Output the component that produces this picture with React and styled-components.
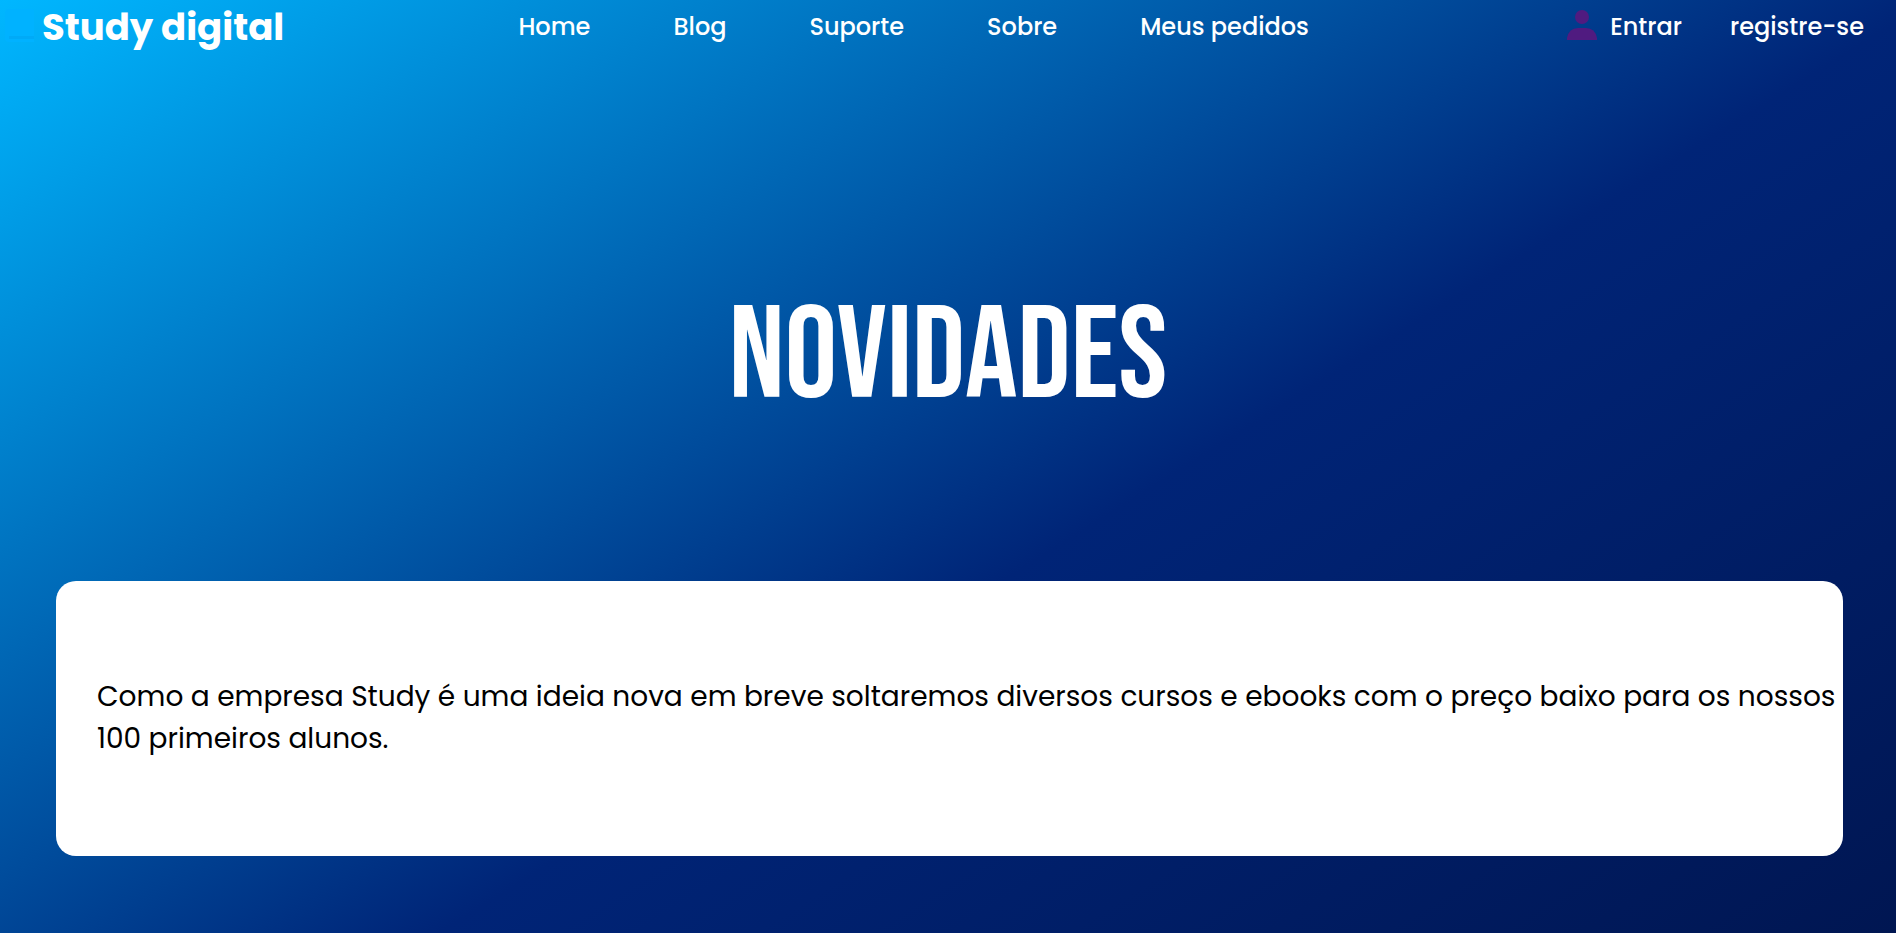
import React from "react";
import styled, { createGlobalStyle } from "styled-components";

const GlobalStyle = createGlobalStyle`
  * { box-sizing: border-box; }
  body {
    margin: 0;
    font-family: Poppins, Inter, "Open Sans", sans-serif;
  }
`;

const Page = styled.div`
  min-height: 100vh;
  background: linear-gradient(148deg, #00b7ff 0%, #002477 57%, #001652 100%);
`;

const Header = styled.header`
  display: flex;
  align-items: center;
  justify-content: space-between;
  height: 54px;
  padding: 0 32px 0 4px;
  color: #fff;
`;

const Brand = styled.a`
  display: flex;
  align-items: center;
  gap: 7px;
  color: #fff;
  font-size: 37px;
  line-height: 54px;
  font-weight: 700;
  text-decoration: none;
`;

const BookIcon = styled.svg`
  width: 31px;
  height: 36px;
  flex: none;
`;

const Nav = styled.nav`
  display: flex;
  gap: 83px;
  margin-right: 24px;
`;

const Account = styled.div`
  display: flex;
  align-items: center;
  gap: 48px;
`;

const HeaderLink = styled.a`
  display: flex;
  align-items: center;
  gap: 13px;
  color: #fff;
  font-size: 24px;
  line-height: 36px;
  font-weight: 500;
  text-decoration: none;
`;

const UserIcon = styled.svg`
  width: 30px;
  height: 36px;
  flex: none;
`;

const Title = styled.h1`
  margin: 0;
  padding: 237px 0 157px;
  color: #fff;
  font-family: "Bebas Neue", "Liberation Sans Narrow", "Roboto", sans-serif;
  font-size: 131px;
  line-height: 133px;
  font-weight: 400;
  text-align: center;
`;

const Card = styled.article`
  margin: 0 53px 0 56px;
  padding: 95px 4px 96px 41px;
  border-radius: 20px;
  background: #fff;
  color: #000;
`;

const Text = styled.p`
  margin: 0;
  font-size: 28px;
  line-height: 42px;
`;

const links = ["Home", "Blog", "Suporte", "Sobre", "Meus pedidos"];

export default function App() {
  return (
    <Page>
      <GlobalStyle />
      <Header>
        <Brand href="#">
          <BookIcon viewBox="0 0 31 36" aria-hidden="true">
            <path d="M5 0H28Q30 0 30 2V33H5Q1 33 1 29V4Q1 0 5 0Z" fill="#00b2ff" />
            <path d="M5 27H30V30H5Z" fill="#00aaf7" />
          </BookIcon>
          Study digital
        </Brand>
        <Nav>
          {links.map((label) => (
            <HeaderLink href="#" key={label}>{label}</HeaderLink>
          ))}
        </Nav>
        <Account>
          <HeaderLink href="#">
            <UserIcon viewBox="0 0 30 36" aria-hidden="true">
              <circle cx="15" cy="8" r="7" fill="#501b80" />
              <path d="M0 31V29Q2 19 11 19H19Q28 19 30 29V31Z" fill="#501b80" />
            </UserIcon>
            Entrar
          </HeaderLink>
          <HeaderLink href="#">registre-se</HeaderLink>
        </Account>
      </Header>
      <main>
        <Title>NOVIDADES</Title>
        <Card>
          <Text>
            Como a empresa Study é uma ideia nova em breve soltaremos diversos cursos e ebooks com o preço baixo para os nossos 100 primeiros alunos.
          </Text>
        </Card>
      </main>
    </Page>
  );
}
